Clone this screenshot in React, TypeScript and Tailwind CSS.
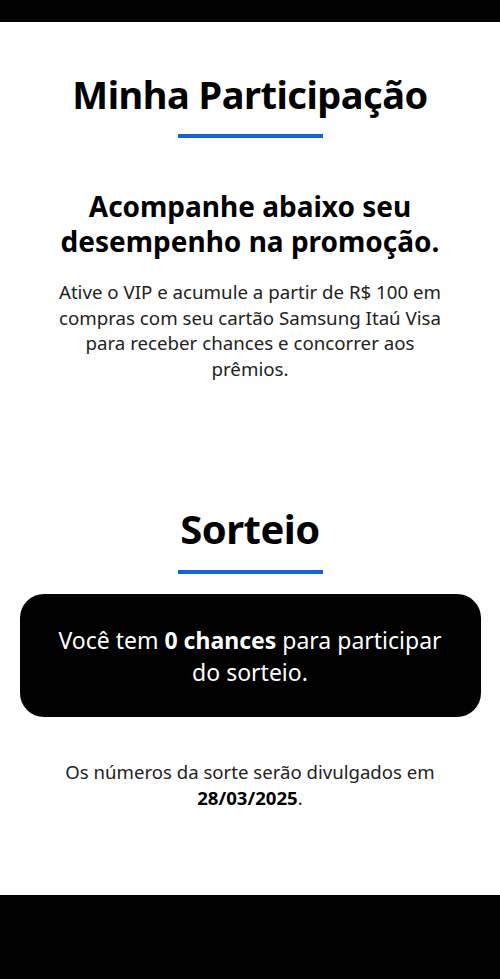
import React from "react";

export default function App() {
  const font = { fontFamily: '"Noto Sans", "Open Sans", sans-serif' };
  return (
    <div className="w-[500px] min-h-[979px] bg-white flex flex-col text-black" style={font}>
      <div className="h-[22px] bg-black shrink-0" />
      <div className="flex flex-col items-center text-center pt-[48px]">
        <h1 className="text-[38px] leading-[48px] font-bold tracking-[-0.5px]">Minha Participação</h1>
        <div className="mt-[16px] w-[145px] h-[4px] bg-[#1366d6]" />
        <h2 className="mt-[51px] text-[28px] leading-[35px] font-bold px-[40px]">
          Acompanhe abaixo seu
          <br />
          desempenho na promoção.
        </h2>
        <p className="mt-[20px] text-[18.7px] leading-[25.5px] text-[#222] px-[50px]">
          Ative o VIP e acumule a partir de R$ 100 em compras com seu cartão Samsung Itaú Visa para receber chances e concorrer aos prêmios.
        </p>
        <h1 className="mt-[124px] text-[40px] leading-[48px] font-bold tracking-[-0.5px]">Sorteio</h1>
        <div className="mt-[17px] w-[145px] h-[4px] bg-[#1366d6]" />
        <div className="mt-[20px] w-[461px] h-[123px] bg-black rounded-[24px] flex items-center justify-center px-[34px]">
          <p className="text-white text-[23px] leading-[32px]">
            Você tem <span className="font-bold">0 chances</span> para participar do sorteio.
          </p>
        </div>
        <p className="mt-[42px] text-[18.6px] leading-[26px] text-[#222] px-[60px]">
          Os números da sorte serão divulgados em <span className="font-bold text-black">28/03/2025</span>.
        </p>
      </div>
      <div className="mt-auto h-[84px] bg-black shrink-0" />
    </div>
  );
}
